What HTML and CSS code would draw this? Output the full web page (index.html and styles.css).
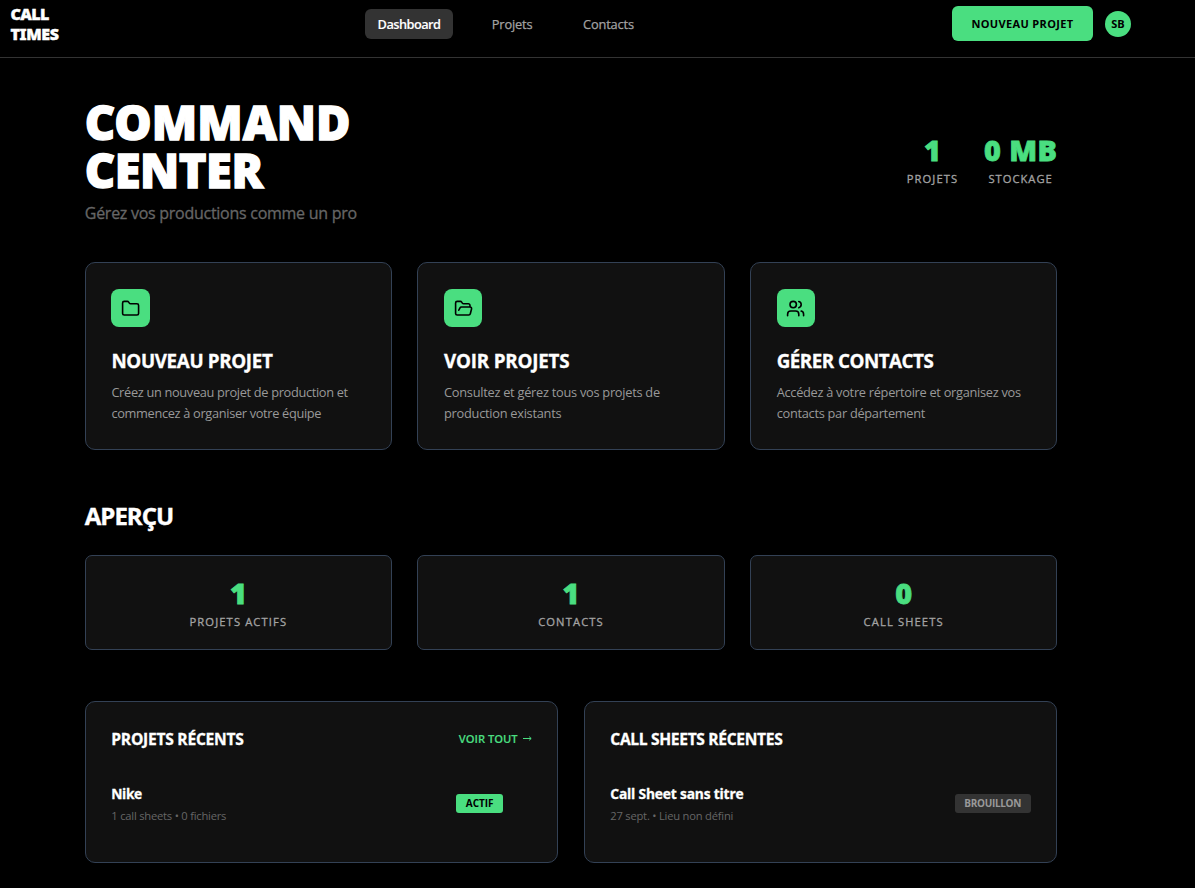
FILE: index.html
```html
<!DOCTYPE html>
<html lang="fr">
<head>
<meta charset="utf-8">
<title>Call Times</title>
<link rel="stylesheet" href="styles.css">
</head>
<body>
<header class="topbar">
  <a class="logo"><span class="logo-call">CALL</span><span class="logo-times">TIMES</span></a>
  <nav class="nav">
    <a class="nav-item active"><span>Dashboard</span></a>
    <a class="nav-item projets"><span>Projets</span></a>
    <a class="nav-item contacts"><span>Contacts</span></a>
  </nav>
  <div class="actions">
    <button class="btn-new">NOUVEAU PROJET</button>
    <div class="avatar">SB</div>
  </div>
</header>
<main class="main">
  <section class="hero">
    <div>
      <h1 class="title"><span class="t-command">COMMAND</span><span class="t-center">CENTER</span></h1>
      <p class="subtitle">Gérez vos productions comme un pro</p>
    </div>
    <div class="hero-stats">
      <div class="stat"><div class="num">1</div><div class="label l-projets">PROJETS</div></div>
      <div class="stat"><div class="num mb">0 MB</div><div class="label l-stock">STOCKAGE</div></div>
    </div>
  </section>
  <section class="grid-3">
    <article class="card action">
      <div class="tile"><svg class="icon" viewBox="0 0 24 24"><path d="M20 20a2 2 0 0 0 2-2V8a2 2 0 0 0-2-2h-7.900a2 2 0 0 1-1.690-.900L9.600 3.900A2 2 0 0 0 7.930 3H4a2 2 0 0 0-2 2v13a2 2 0 0 0 2 2Z"/></svg></div>
      <h3 class="card-title ct-new">NOUVEAU PROJET</h3>
      <p class="desc d-new">Créez un nouveau projet de production et<br>commencez à organiser votre équipe</p>
    </article>
    <article class="card action">
      <div class="tile"><svg class="icon" viewBox="0 0 24 24"><path d="m6 14 1.500-2.900A2 2 0 0 1 9.240 10H20a2 2 0 0 1 1.940 2.500l-1.540 6a2 2 0 0 1-1.950 1.500H4a2 2 0 0 1-2-2V5a2 2 0 0 1 2-2h3.900a2 2 0 0 1 1.690.900l.810 1.200a2 2 0 0 0 1.670.900H18a2 2 0 0 1 2 2v2"/></svg></div>
      <h3 class="card-title ct-see">VOIR PROJETS</h3>
      <p class="desc d-see">Consultez et gérez tous vos projets de<br>production existants</p>
    </article>
    <article class="card action">
      <div class="tile"><svg class="icon" viewBox="0 0 24 24"><path d="M16 21v-2a4 4 0 0 0-4-4H6a4 4 0 0 0-4 4v2"/><circle cx="9" cy="7" r="4"/><path d="M22 21v-2a4 4 0 0 0-3-3.870"/><path d="M16 3.130a4 4 0 0 1 0 7.750"/></svg></div>
      <h3 class="card-title ct-contacts">GÉRER CONTACTS</h3>
      <p class="desc d-contacts">Accédez à votre répertoire et organisez vos<br>contacts par département</p>
    </article>
  </section>
  <h2 class="overview">APERÇU</h2>
  <section class="grid-3">
    <div class="card metric"><div class="num">1</div><div class="label l-actifs">PROJETS ACTIFS</div></div>
    <div class="card metric"><div class="num">1</div><div class="label l-contacts">CONTACTS</div></div>
    <div class="card metric"><div class="num">0</div><div class="label l-sheets">CALL SHEETS</div></div>
  </section>
  <section class="grid-2">
    <div class="card recent">
      <div class="recent-head"><h3 class="recent-title rt-projets">PROJETS RÉCENTS</h3><a class="see-all">VOIR TOUT <svg class="arrow" viewBox="0 0 9 5"><path d="M0 2.500H8M6.200.700 8.200 2.500 6.200 4.300"/></svg></a></div>
      <div class="row row-project">
        <div><div class="name n-nike">Nike</div><div class="meta m-nike">1 call sheets • 0 fichiers</div></div>
        <span class="badge on">ACTIF</span>
      </div>
    </div>
    <div class="card recent">
      <div class="recent-head"><h3 class="recent-title rt-sheets">CALL SHEETS RÉCENTES</h3></div>
      <div class="row">
        <div><div class="name n-sheet">Call Sheet sans titre</div><div class="meta m-sheet">27 sept. • Lieu non défini</div></div>
        <span class="badge draft">BROUILLON</span>
      </div>
    </div>
  </section>
</main>
</body>
</html>
```
FILE: styles.css
```css
* { box-sizing: border-box; margin: 0; padding: 0; }
body { background: #000; color: #fff; font-family: "Open Sans", "Noto Sans", sans-serif; overflow: hidden; white-space: nowrap; }
.topbar { height: 58px; border-bottom: 1px solid #333; display: grid; grid-template-columns: 365px 1fr 243px; align-items: start; }
.logo { display: flex; flex-direction: column; padding: 5px 0 0 10.500px; font: 900 16px/19.500px "Noto Sans", sans-serif; letter-spacing: -.6px; -webkit-text-stroke: .4px #fff; }
.logo-times { letter-spacing: -.4px; }
.nav { display: flex; padding-top: 9px; }
.nav-item { height: 30px; font-size: 12.800px; line-height: 30px; font-weight: 500; letter-spacing: -.15px; color: #a3a3a3; -webkit-text-stroke: .25px #a3a3a3; }
.nav-item.active { width: 88px; text-align: center; border-radius: 6px; background: #333; color: #fff; font-weight: 600; letter-spacing: -.55px; -webkit-text-stroke: .1px #fff; }
.projets { margin-left: 38.800px; width: 91.200px; }
.actions { display: flex; padding-top: 6px; gap: 12px; }
.btn-new { width: 141px; height: 35px; border: 0; border-radius: 6px; background: #4ade80; color: #000; font: 700 11px "Open Sans", sans-serif; letter-spacing: .35px; }
.avatar { width: 26px; height: 26px; margin-top: 5px; border-radius: 50%; background: #4ade80; color: #000; font-size: 11px; line-height: 26px; font-weight: 700; text-align: center; }
.main { width: 972.400px; margin-left: 84.800px; padding-top: 40px; }
.hero { height: 164px; display: flex; justify-content: space-between; }
.title { font: 900 47px/48px "Noto Sans", sans-serif; letter-spacing: -.5px; -webkit-text-stroke: 1.300px #fff; }
.title span { display: block; }
.t-command { letter-spacing: 0; }
.subtitle { margin-top: 7px; font-size: 16px; line-height: 24px; font-weight: 500; letter-spacing: -.27px; color: #666; -webkit-text-stroke: .3px #666; }
.hero-stats { display: flex; gap: 25.600px; padding-top: 36px; text-align: center; }
.num { font: 900 28.800px/32px "Noto Sans", sans-serif; color: #4ade80; -webkit-text-stroke: .8px #4ade80; }
.mb { letter-spacing: .4px; }
.label { font-size: 11.200px; line-height: 16px; margin-top: 5px; font-weight: 500; letter-spacing: 1.120px; color: #a3a3a3; -webkit-text-stroke: .3px #a3a3a3; }
.l-stock { letter-spacing: 1px; }
.grid-3 { display: grid; grid-template-columns: repeat(3, minmax(0, 1fr)); gap: 25.600px; }
.grid-2 { display: grid; grid-template-columns: repeat(2, minmax(0, 1fr)); gap: 25.600px; margin-top: 51px; }
.card { background: #111; border: 1px solid #334155; border-radius: 10px; }
.action { height: 188px; padding: 26px 25.600px; }
.tile { width: 38.400px; height: 38.400px; border-radius: 8px; background: #4ade80; display: flex; align-items: center; justify-content: center; }
.icon { width: 19.200px; height: 19.200px; fill: none; stroke: #000; stroke-width: 2; stroke-linecap: round; stroke-linejoin: round; }
.card-title { margin-top: 20.600px; font-size: 18.800px; line-height: 26px; font-weight: 700; letter-spacing: -.35px; -webkit-text-stroke: .3px #fff; }
.ct-see { letter-spacing: -.2px; }
.ct-contacts { letter-spacing: -.5px; }
.desc { margin-top: 8px; font-size: 12.800px; line-height: 20.800px; letter-spacing: -.33px; color: #999; }
.d-see { letter-spacing: -.27px; }
.d-contacts { letter-spacing: -.29px; }
.overview { margin: 49px 0 23px; font-size: 24px; line-height: 33px; font-weight: 700; letter-spacing: -1px; -webkit-text-stroke: .4px #fff; }
.metric { height: 95px; border-radius: 7px; padding-top: 21px; text-align: center; }
.recent { height: 162px; padding: 25px 25.500px; }
.recent-head { display: flex; justify-content: space-between; align-items: center; height: 24px; }
.recent-title { font-size: 15.600px; font-weight: 700; letter-spacing: -.25px; -webkit-text-stroke: .3px #fff; }
.rt-sheets { letter-spacing: -.33px; }
.see-all { display: flex; align-items: center; gap: 5px; margin-top: -2px; font-size: 11.200px; font-weight: 600; color: #4ade80; -webkit-text-stroke: .15px #4ade80; }
.arrow { width: 9px; height: 5px; fill: none; stroke: #4ade80; stroke-width: 1; }
.row { display: flex; justify-content: space-between; margin-top: 32px; }
.row-project { padding-right: 28.500px; }
.name { font-size: 13.800px; line-height: 22px; font-weight: 700; letter-spacing: -.18px; -webkit-text-stroke: .3px #fff; }
.n-nike { letter-spacing: -.4px; }
.meta { font-size: 11.200px; line-height: 16px; margin-top: 3px; letter-spacing: -.22px; color: #666; }
.badge { height: 19px; margin-top: 11px; border-radius: 3px; font-size: 10px; line-height: 19px; font-weight: 700; text-align: center; }
.on { width: 47px; background: #4ade80; color: #000; }
.draft { width: 76px; background: #333; color: #999; letter-spacing: -.3px; }
```
